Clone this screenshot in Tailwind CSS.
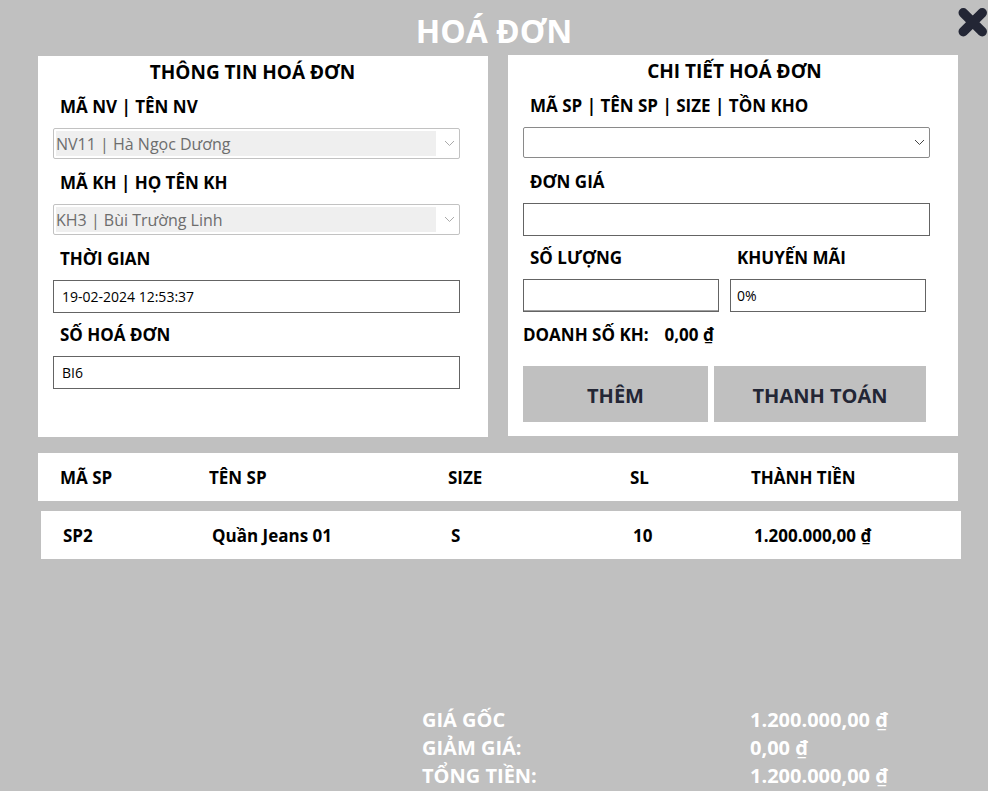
<!DOCTYPE html>
<html lang="vi">
<head>
<meta charset="utf-8">
<meta name="viewport" content="width=device-width, initial-scale=1">
<title>Hoá đơn</title>
<script src="https://cdn.jsdelivr.net/npm/@tailwindcss/browser@4"></script>
</head>
<body class="bg-[#c0c0c0] font-['Open_Sans','Noto_Sans',sans-serif] text-black">
<main class="flex min-h-screen flex-col pb-px">
  <header class="relative flex h-[55px] items-center justify-center pt-[6px]">
    <h1 class="text-[32px] leading-10 font-bold text-white">HOÁ ĐƠN</h1>
    <button type="button" aria-label="Đóng" class="absolute top-[7px] right-0 size-[30px]">
      <svg viewBox="0 0 30 30" class="size-[30px]" fill="none" stroke="#232635" aria-hidden="true">
        <path d="M5.300 5.800 24.200 24.600M24.200 5.800 5.300 24.600" stroke-width="9.600" stroke-linecap="round"/>
      </svg>
    </button>
  </header>

  <div class="flex flex-1 flex-col pr-[30px] pl-[38px]">
    <div class="grid grid-cols-2 items-start gap-5">
      <section class="mt-px bg-white pr-7 pb-[45px] pl-[15px]">
        <h2 class="flex h-8 items-center justify-center pr-2 text-[19px] leading-6 font-bold">THÔNG TIN HOÁ ĐƠN</h2>
        <div class="grid auto-rows-[76px]">
          <div class="flex flex-col">
            <label for="nv" class="mb-[9px] pt-[7px] pl-[7px] text-[17px] leading-6 font-bold">MÃ NV | TÊN NV</label>
            <div class="relative">
              <select id="nv" disabled class="block h-[31px] w-full appearance-none rounded-xs border border-[#c2c2c2] bg-[#efefef] bg-clip-content py-[2px] pr-[23px] pl-[2px] text-[16px] leading-6 text-[#6d6d6d] opacity-100"><option>NV11 | Hà Ngọc Dương</option></select>
              <svg class="pointer-events-none absolute top-[12px] right-[5px] h-[7px] w-[11px]" viewBox="0 0 11 7" fill="none" stroke="#aaaaaa" aria-hidden="true"><path d="M1 1 5.500 5.500 10 1"/></svg>
            </div>
          </div>
          <div class="flex flex-col">
            <label for="kh" class="mb-[9px] pt-[7px] pl-[7px] text-[17px] leading-6 font-bold">MÃ KH | HỌ TÊN KH</label>
            <div class="relative">
              <select id="kh" disabled class="block h-[31px] w-full appearance-none rounded-xs border border-[#c2c2c2] bg-[#efefef] bg-clip-content py-[2px] pr-[23px] pl-[2px] text-[16px] leading-6 text-[#6d6d6d] opacity-100"><option>KH3 | Bùi Trường Linh</option></select>
              <svg class="pointer-events-none absolute top-[12px] right-[5px] h-[7px] w-[11px]" viewBox="0 0 11 7" fill="none" stroke="#aaaaaa" aria-hidden="true"><path d="M1 1 5.500 5.500 10 1"/></svg>
            </div>
          </div>
          <div class="flex flex-col">
            <label for="tg" class="mb-[9px] pt-[7px] pl-[7px] text-[17px] leading-6 font-bold">THỜI GIAN</label>
            <input id="tg" type="text" value="19-02-2024 12:53:37" class="h-[33px] w-full border border-[#646464] bg-white px-2 text-[14px]">
          </div>
          <div class="flex flex-col">
            <label for="hd" class="mb-[9px] pt-[7px] pl-[7px] text-[17px] leading-6 font-bold">SỐ HOÁ ĐƠN</label>
            <input id="hd" type="text" value="BI6" class="h-[33px] w-full border border-[#646464] bg-white px-2 text-[14px]">
          </div>
        </div>
      </section>

      <section class="bg-white pr-7 pb-[14px] pl-[15px]">
        <h2 class="flex h-8 items-center justify-center pl-4 text-[19px] leading-6 font-bold">CHI TIẾT HOÁ ĐƠN</h2>
        <div class="grid auto-rows-[76px]">
          <div class="flex flex-col">
            <label for="sp" class="mb-[9px] pt-[7px] pl-[7px] text-[17px] leading-6 font-bold">MÃ SP | TÊN SP | SIZE | TỒN KHO</label>
            <div class="relative">
              <select id="sp" class="block h-[31px] w-full appearance-none rounded-xs border border-[#8a8a8a] bg-white py-[2px] pr-[23px] pl-[2px] text-[16px] leading-6"><option></option></select>
              <svg class="pointer-events-none absolute top-[12px] right-[5px] h-[7px] w-[11px]" viewBox="0 0 11 7" fill="none" stroke="#444444" aria-hidden="true"><path d="M1 1 5.500 5.500 10 1"/></svg>
            </div>
          </div>
          <div class="flex flex-col">
            <label for="dg" class="mb-[9px] pt-[7px] pl-[7px] text-[17px] leading-6 font-bold">ĐƠN GIÁ</label>
            <input id="dg" type="text" class="h-[33px] w-full border border-[#646464] bg-white px-2 text-[14px]">
          </div>
          <div class="mr-1 grid grid-cols-2 gap-[11px]">
            <div class="flex flex-col">
              <label for="sl" class="mb-[9px] pt-[7px] pl-[7px] text-[17px] leading-6 font-bold">SỐ LƯỢNG</label>
              <input id="sl" type="text" class="h-[33px] w-full border border-[#646464] bg-white px-2 text-[14px] shadow-[inset_0_-1px_0_#a0a0a0]">
            </div>
            <div class="flex flex-col">
              <label for="km" class="mb-[9px] pt-[7px] pl-[7px] text-[17px] leading-6 font-bold">KHUYẾN MÃI</label>
              <input id="km" type="text" value="0%" class="h-[33px] w-full border border-[#646464] bg-white px-[6px] text-[14px]">
            </div>
          </div>
        </div>
        <p class="flex h-10 items-center gap-4 text-[17px] leading-6 font-bold"><span>DOANH SỐ KH:</span><span>0,00 ₫</span></p>
        <div class="mt-[11px] mr-1 grid grid-cols-[185fr_212fr] gap-[6px]">
          <button type="button" class="h-14 bg-[#c0c0c0] pt-1 text-[20px] font-bold text-[#232635]">THÊM</button>
          <button type="button" class="h-14 bg-[#c0c0c0] pt-1 text-[20px] font-bold text-[#232635]">THANH TOÁN</button>
        </div>
      </section>
    </div>

    <table class="mt-4 block text-left text-[17px] leading-6 font-bold">
      <thead class="block">
        <tr class="grid h-12 grid-cols-[149fr_239fr_182fr_121fr_185fr] items-center bg-white px-[22px] pt-[2px]">
          <th scope="col">MÃ SP</th><th scope="col">TÊN SP</th><th scope="col">SIZE</th><th scope="col">SL</th><th scope="col">THÀNH TIỀN</th>
        </tr>
      </thead>
      <tbody class="mt-[10px] -mr-[3px] ml-[3px] block">
        <tr class="grid h-12 grid-cols-[149fr_239fr_182fr_121fr_185fr] items-center bg-white px-[22px] pt-[2px]">
          <td>SP2</td><td>Quần Jeans 01</td><td>S</td><td>10</td><td>1.200.000,00 ₫</td>
        </tr>
      </tbody>
    </table>

    <dl class="mt-auto ml-[384px] grid grid-cols-[328fr_208fr] text-[20px] leading-7 font-bold text-white">
      <dt>GIÁ GỐC</dt><dd>1.200.000,00 ₫</dd>
      <dt>GIẢM GIÁ:</dt><dd>0,00 ₫</dd>
      <dt>TỔNG TIỀN:</dt><dd>1.200.000,00 ₫</dd>
    </dl>
  </div>
</main>
</body>
</html>
